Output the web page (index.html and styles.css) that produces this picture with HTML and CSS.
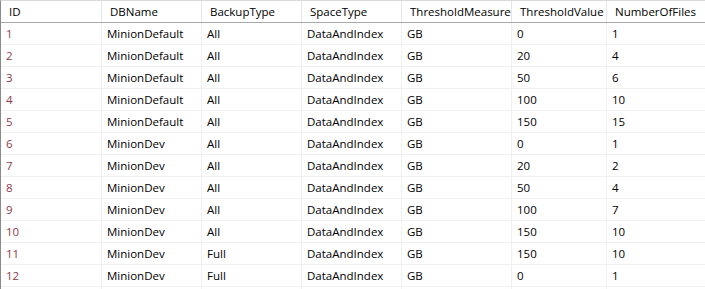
FILE: index.html
```html
<!DOCTYPE html>
<html>
<head>
<meta charset="utf-8">
<link rel="stylesheet" href="styles.css">
</head>
<body>
<div class="grid">
  <div class="row head">
    <div class="cell">ID</div><div class="cell">DBName</div><div class="cell">BackupType</div><div class="cell">SpaceType</div><div class="cell">ThresholdMeasure</div><div class="cell">ThresholdValue</div><div class="cell">NumberOfFiles</div>
  </div>
  <div class="row"><div class="cell id">1</div><div class="cell">MinionDefault</div><div class="cell">All</div><div class="cell">DataAndIndex</div><div class="cell">GB</div><div class="cell">0</div><div class="cell">1</div></div>
  <div class="row"><div class="cell id">2</div><div class="cell">MinionDefault</div><div class="cell">All</div><div class="cell">DataAndIndex</div><div class="cell">GB</div><div class="cell">20</div><div class="cell">4</div></div>
  <div class="row"><div class="cell id">3</div><div class="cell">MinionDefault</div><div class="cell">All</div><div class="cell">DataAndIndex</div><div class="cell">GB</div><div class="cell">50</div><div class="cell">6</div></div>
  <div class="row"><div class="cell id">4</div><div class="cell">MinionDefault</div><div class="cell">All</div><div class="cell">DataAndIndex</div><div class="cell">GB</div><div class="cell">100</div><div class="cell">10</div></div>
  <div class="row"><div class="cell id">5</div><div class="cell">MinionDefault</div><div class="cell">All</div><div class="cell">DataAndIndex</div><div class="cell">GB</div><div class="cell">150</div><div class="cell">15</div></div>
  <div class="row"><div class="cell id">6</div><div class="cell">MinionDev</div><div class="cell">All</div><div class="cell">DataAndIndex</div><div class="cell">GB</div><div class="cell">0</div><div class="cell">1</div></div>
  <div class="row"><div class="cell id">7</div><div class="cell">MinionDev</div><div class="cell">All</div><div class="cell">DataAndIndex</div><div class="cell">GB</div><div class="cell">20</div><div class="cell">2</div></div>
  <div class="row"><div class="cell id">8</div><div class="cell">MinionDev</div><div class="cell">All</div><div class="cell">DataAndIndex</div><div class="cell">GB</div><div class="cell">50</div><div class="cell">4</div></div>
  <div class="row"><div class="cell id">9</div><div class="cell">MinionDev</div><div class="cell">All</div><div class="cell">DataAndIndex</div><div class="cell">GB</div><div class="cell">100</div><div class="cell">7</div></div>
  <div class="row"><div class="cell id">10</div><div class="cell">MinionDev</div><div class="cell">All</div><div class="cell">DataAndIndex</div><div class="cell">GB</div><div class="cell">150</div><div class="cell">10</div></div>
  <div class="row"><div class="cell id">11</div><div class="cell">MinionDev</div><div class="cell">Full</div><div class="cell">DataAndIndex</div><div class="cell">GB</div><div class="cell">150</div><div class="cell">10</div></div>
  <div class="row"><div class="cell id">12</div><div class="cell">MinionDev</div><div class="cell">Full</div><div class="cell">DataAndIndex</div><div class="cell">GB</div><div class="cell">0</div><div class="cell">1</div></div>
  <div class="row filler"><div class="cell"></div><div class="cell"></div><div class="cell"></div><div class="cell"></div><div class="cell"></div><div class="cell"></div><div class="cell"></div></div>
</div>
</body>
</html>
```
FILE: styles.css
```css
html, body {
  margin: 0;
  padding: 0;
  background: #ffffff;
}
body {
  width: 705px;
  height: 289px;
  overflow: hidden;
  font-family: "Segoe UI", "Open Sans", "Noto Sans", sans-serif;
  font-size: 11.5px;
  color: #000000;
}
.grid {
  border-left: 1px solid #8a8a8a;
  border-top: 1px solid #d9d9d9;
  height: 289px;
  box-sizing: border-box;
  overflow: hidden;
}
.row {
  display: grid;
  grid-template-columns: 101px 100px 100px 100px 110px 95px 1fr;
  height: 22px;
  box-sizing: border-box;
  border-bottom: 1px solid #f0f0f0;
}
.row.head {
  height: 22px;
  border-bottom: 1px solid #a9a9a9;
}
.row.filler {
  height: 2px;
  border-bottom: none;
}
.cell {
  border-right: 1px solid #f0f0f0;
  padding-left: 5px;
  line-height: 21px;
  white-space: nowrap;
  overflow: hidden;
}
.cell:last-child {
  border-right: none;
}
.head .cell {
  padding-left: 8px;
  line-height: 21px;
  border-right-color: #e5e5e5;
}
.id {
  color: #8e3a4c;
}
```
